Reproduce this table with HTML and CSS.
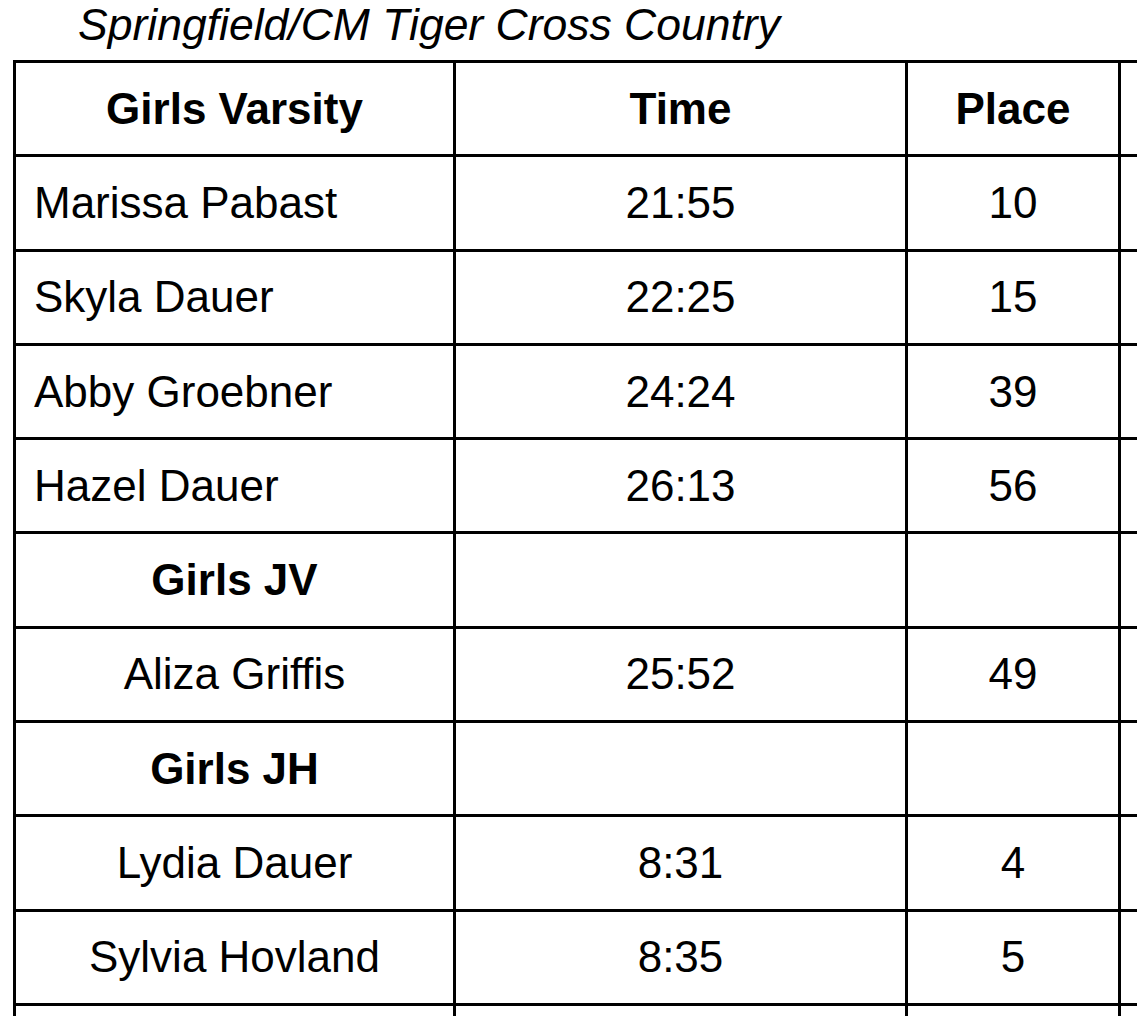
FILE: index.html
```html
<!DOCTYPE html>
<html>
<head>
<meta charset="utf-8">
<link rel="stylesheet" href="styles.css">
</head>
<body>
<div class="title">Springfield/CM Tiger Cross Country</div>
<table class="results">
  <colgroup>
    <col class="c-name">
    <col class="c-time">
    <col class="c-place">
    <col class="c-extra">
  </colgroup>
  <tr class="head">
    <td class="center">Girls Varsity</td>
    <td class="center">Time</td>
    <td class="center">Place</td>
    <td></td>
  </tr>
  <tr><td class="left">Marissa Pabast</td><td class="center">21:55</td><td class="center">10</td><td></td></tr>
  <tr><td class="left">Skyla Dauer</td><td class="center">22:25</td><td class="center">15</td><td></td></tr>
  <tr><td class="left">Abby Groebner</td><td class="center">24:24</td><td class="center">39</td><td></td></tr>
  <tr><td class="left">Hazel Dauer</td><td class="center">26:13</td><td class="center">56</td><td></td></tr>
  <tr class="head"><td class="center">Girls JV</td><td></td><td></td><td></td></tr>
  <tr><td class="center">Aliza Griffis</td><td class="center">25:52</td><td class="center">49</td><td></td></tr>
  <tr class="head"><td class="center">Girls JH</td><td></td><td></td><td></td></tr>
  <tr><td class="center">Lydia Dauer</td><td class="center">8:31</td><td class="center">4</td><td></td></tr>
  <tr><td class="center">Sylvia Hovland</td><td class="center">8:35</td><td class="center">5</td><td></td></tr>
  <tr><td class="center">&nbsp;</td><td></td><td></td><td></td></tr>
</table>
</body>
</html>
```
FILE: styles.css
```css
html, body {
  margin: 0;
  padding: 0;
  background: #fff;
  overflow: hidden;
}
body {
  width: 1137px;
  height: 1016px;
  font-family: "Liberation Sans", Arial, sans-serif;
  color: #000;
}
.title {
  font-style: italic;
  font-size: 44.5px;
  line-height: 52px;
  height: 52px;
  margin-top: -1px;
  padding-left: 78px;
  margin-bottom: 9px;
  white-space: nowrap;
}
.results {
  border-collapse: collapse;
  table-layout: fixed;
  width: 1150px;
  margin-left: 13px;
  font-size: 44px;
}
.c-name { width: 440px; }
.c-time { width: 452px; }
.c-place { width: 213px; }
.c-extra { width: 45px; }
.results td {
  border: 3px solid #000;
  height: 91.3px;
  padding: 0;
  vertical-align: middle;
  white-space: nowrap;
}
.results td.left {
  text-align: left;
  padding-left: 18px;
}
.results td.center {
  text-align: center;
}
.head td {
  font-weight: bold;
}
```
